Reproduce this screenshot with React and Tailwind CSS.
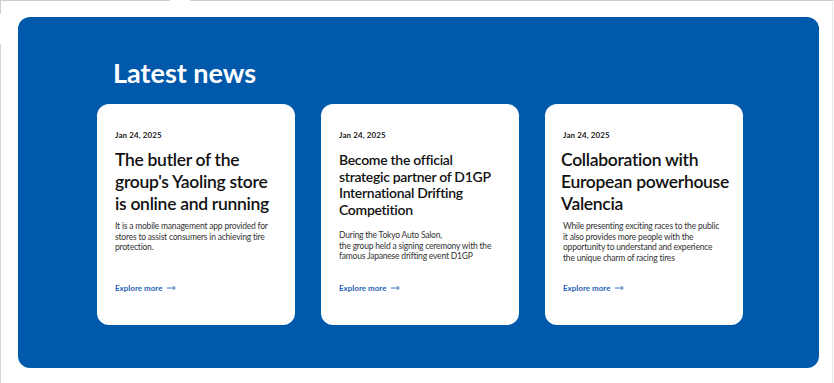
import React from "react";

const cards = [
  {
    date: "Jan 24, 2025",
    title: ["The butler of the", "group's Yaoling store", "is online and running"],
    titleCls: "text-[17.5px] leading-[22px] mt-[8px] tracking-[-0.3px]",
    desc: ["It is a mobile management app provided for", "stores to assist consumers in achieving tire", "protection."],
    descCls: "mt-[6px]",
  },
  {
    date: "Jan 24, 2025",
    title: ["Become the official", "strategic partner of D1GP", "International Drifting", "Competition"],
    titleCls: "text-[14px] leading-[16.5px] mt-[11px] tracking-[-0.3px]",
    desc: ["During the Tokyo Auto Salon,", "the group held a signing ceremony with the", "famous Japanese drifting event D1GP"],
    descCls: "mt-[12px]",
  },
  {
    date: "Jan 24, 2025",
    title: ["Collaboration with", "European powerhouse", "Valencia"],
    titleCls: "text-[17.5px] leading-[22px] mt-[8px] -ml-[2px] tracking-[-0.3px]",
    desc: ["While presenting exciting races to the public", "it also provides more people with the", "opportunity to understand and experience", "the unique charm of racing tires"],
    descCls: "mt-[6px] leading-[10.3px]",
  },
];

function Card({ c }) {
  return (
    <div className="w-[198px] h-[221px] bg-white rounded-[12px] flex flex-col pl-[18px] pr-[10px] pt-[25px] pb-[31px]">
      <div className="text-[8px] leading-[12px] font-bold text-[#1a1a1a] tracking-[0.1px]">{c.date}</div>
      <div className={"font-semibold text-[#111] " + c.titleCls}>
        {c.title.map((t, i) => (
          <div key={i} className="whitespace-nowrap">{t}</div>
        ))}
      </div>
      <div className={"text-[8.5px] leading-[10.5px] text-[#333] tracking-[-0.2px] " + c.descCls}>
        {c.desc.map((t, i) => (
          <div key={i} className="whitespace-nowrap">{t}</div>
        ))}
      </div>
      <div className="mt-auto flex items-center gap-[5px] text-[8px] leading-[12px] font-bold text-[#1f63b3]">
        <span>Explore more</span>
        <svg width="9" height="6" viewBox="0 0 9 6" fill="none" stroke="#1f63b3" strokeWidth="0.9">
          <path d="M0 3H8.2M6 0.8L8.2 3L6 5.2" />
        </svg>
      </div>
    </div>
  );
}

export default function App() {
  return (
    <div
      className="w-[834px] h-[383px] bg-white overflow-hidden relative"
      style={{ fontFamily: 'Lato, "Noto Sans", sans-serif' }}
    >
      <div className="absolute left-0 top-0 w-[170px] h-px bg-[#cfcfcf]" />
      <div className="absolute left-[190px] top-0 right-0 h-px bg-[#cfcfcf]" />
      <div className="absolute left-0 top-0 w-px h-[14px] bg-[#cfcfcf]" />
      <div className="absolute left-0 top-[44px] w-px bottom-0 bg-[#d6d6d6]" />
      <div className="absolute right-[1px] top-0 w-px bottom-0 bg-[#e6e6e6]" />
      <div className="pt-[17px] pl-[18px]">
        <div className="w-[801px] h-[351px] rounded-[12px] bg-[#0159ab] pt-[40px]">
          <h2 className="pl-[95px] text-[27px] leading-[32px] font-bold text-white">
            Latest news
          </h2>
          <div className="pl-[79px] mt-[15px] flex gap-[26px]">
            {cards.map((c, i) => (
              <Card key={i} c={c} />
            ))}
          </div>
        </div>
      </div>
    </div>
  );
}
